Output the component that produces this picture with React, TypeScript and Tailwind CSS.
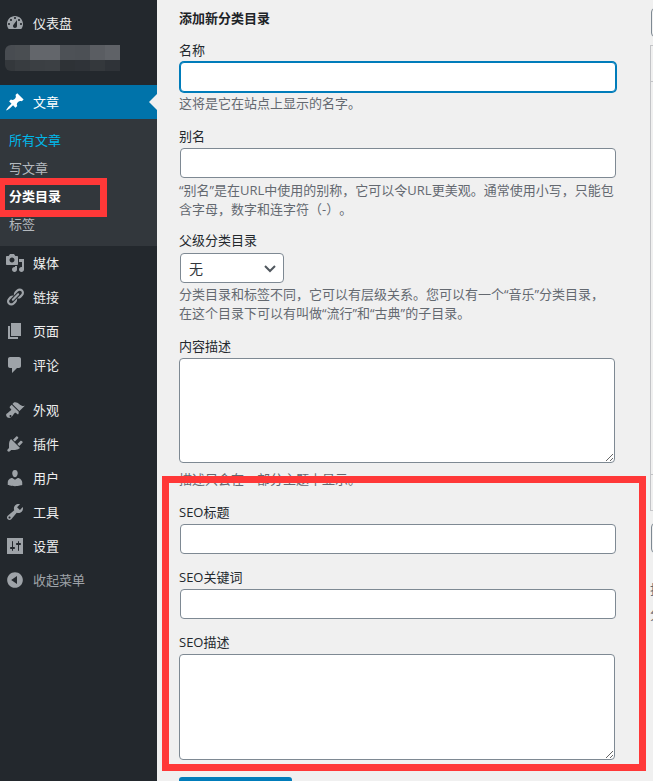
const font = { fontFamily: '"Open Sans", "Noto Sans CJK SC", sans-serif' };

const icons: Record<string, string> = {
  dashboard:
    "M3.76 16h12.48c1.1-1.37 1.76-3.11 1.76-5 0-4.42-3.58-8-8-8s-8 3.58-8 8c0 1.89.66 3.63 1.76 5zM10 4c.55 0 1 .45 1 1s-.45 1-1 1-1-.45-1-1 .45-1 1-1zM6 6c.55 0 1 .45 1 1s-.45 1-1 1-1-.45-1-1 .45-1 1-1zm8 0c.55 0 1 .45 1 1s-.45 1-1 1-1-.45-1-1 .45-1 1-1zm-5.37 5.55L12 7v6c0 1.1-.9 2-2 2s-2-.9-2-2c0-.57.24-1.08.63-1.45zM4 10c.55 0 1 .45 1 1s-.45 1-1 1-1-.45-1-1 .45-1 1-1zm12 0c.55 0 1 .45 1 1s-.45 1-1 1-1-.45-1-1 .45-1 1-1z",
  pin: "M10.44 3.02l1.82-1.82 6.36 6.35-1.83 1.82c-1.05-.68-2.48-.57-3.41.36l-.75.75c-.92.93-1.04 2.35-.35 3.41l-1.83 1.82-2.41-2.41-2.8 2.79c-.42.42-3.38 2.71-3.8 2.29s1.86-3.39 2.28-3.81l2.79-2.79L4.1 9.36l1.83-1.82c1.05.69 2.48.57 3.4-.36l.75-.75c.93-.92 1.05-2.35.36-3.41z",
  media:
    "M13 11V4c0-.55-.45-1-1-1h-1.67L9 1H5L3.67 3H2c-.55 0-1 .45-1 1v7c0 .55.45 1 1 1h10c.55 0 1-.45 1-1zM7 4.5c1.38 0 2.5 1.12 2.5 2.5S8.38 9.5 7 9.5 4.5 8.38 4.5 7 5.62 4.5 7 4.5zM14 6h5v10.5c0 1.38-1.12 2.5-2.5 2.5S14 17.88 14 16.5s1.12-2.5 2.5-2.5c.17 0 .34.02.5.05V9h-3V6zm-4 8.05V13h2v3.5c0 1.38-1.12 2.5-2.5 2.5S7 17.88 7 16.5 8.12 14 9.5 14c.17 0 .34.02.5.05z",
  links:
    "M17.74 2.76c1.68 1.69 1.68 4.41 0 6.1l-1.53 1.52c-1.12 1.12-2.7 1.47-4.14 1.09l2.62-2.61.76-.77.76-.76c.84-.84.84-2.2 0-3.04-.84-.85-2.2-.85-3.04 0l-.77.76-3.38 3.38c-.37-1.44-.02-3.02 1.1-4.14l1.52-1.53c1.69-1.68 4.42-1.68 6.1 0zM8.59 13.43l5.34-5.34c.42-.42.42-1.1 0-1.52-.44-.43-1.13-.39-1.53 0l-5.33 5.34c-.42.42-.42 1.1 0 1.52.44.43 1.13.39 1.52 0zm-.76 2.29l4.14-4.15c.38 1.44.03 3.02-1.09 4.14l-1.52 1.53c-1.69 1.68-4.41 1.68-6.1 0-1.68-1.68-1.68-4.42 0-6.1l1.53-1.52c1.12-1.12 2.7-1.47 4.14-1.1l-4.14 4.15c-.85.84-.85 2.2 0 3.05.84.84 2.2.84 3.04 0z",
  page: "M6 15V2h10v13H6zm-1 1h8v2H3V5h2v11z",
  comments:
    "M5 2h9c1.1 0 2 .9 2 2v7c0 1.1-.9 2-2 2h-2l-5 5v-5H5c-1.1 0-2-.9-2-2V4c0-1.1.9-2 2-2z",
  appearance:
    "M14.48 11.06L7.41 3.99l1.5-1.5c.5-.56 2.3-.47 3.51.32 1.21.8 1.43 1.28 2.91 2.1 1.18.64 2.45 1.26 4.45.85zm-.71.71L6.7 4.7 4.93 6.47c-.39.39-.39 1.02 0 1.41l1.06 1.06c.39.39.39 1.03 0 1.42-.6.6-1.43 1.11-2.21 1.69-.35.26-.7.53-1.01.84C1.43 13.23.91 14.45 1.2 15.6c.24 1.02 1.18 1.95 2.2 2.2 1.15.29 2.37-.23 3.72-1.58.31-.31.58-.66.84-1.01.58-.78 1.09-1.61 1.69-2.21.39-.39 1.03-.39 1.42 0l1.06 1.06c.39.39 1.02.39 1.41 0zM5.5 15c.55 0 1 .45 1 1s-.45 1-1 1-1-.45-1-1 .45-1 1-1z",
  plugins:
    "M13.11 4.36L9.87 7.6 8 5.73l3.24-3.24c.35-.34 1.05-.2 1.56.32.52.51.66 1.21.31 1.55zm-8 1.77l.91-1.12 9.01 9.01-1.19.84c-.71.71-2.63 1.16-3.82 1.16H6.14L4.9 17.26c-.59.59-1.54.59-2.12 0-.59-.58-.59-1.53 0-2.12l1.24-1.24v-3.88c0-1.13.4-3.19 1.09-3.89zm7.26 3.97l3.24-3.24c.34-.35 1.04-.21 1.55.31.52.51.66 1.21.31 1.55l-3.24 3.25z",
  users:
    "M10 9.25c-2.27 0-2.73-3.44-2.73-3.44C7 4.02 7.82 2 9.97 2c2.16 0 2.98 2.02 2.71 3.81 0 0-.41 3.44-2.68 3.44zm0 2.57L12.72 10c2.39 0 4.52 2.33 4.52 4.53v2.49s-3.65 1.13-7.24 1.13c-3.65 0-7.24-1.13-7.24-1.13v-2.49c0-2.25 1.94-4.48 4.47-4.48z",
  tools:
    "M16.68 9.77c-1.34 1.34-3.3 1.67-4.95.99l-5.41 6.52c-.99.99-2.59.99-3.58 0s-.99-2.59 0-3.57l6.52-5.42c-.68-1.65-.35-3.61.99-4.95 1.28-1.28 3.12-1.62 4.72-1.06l-2.89 2.89 2.82 2.82 2.86-2.87c.53 1.58.18 3.39-1.08 4.65zM3.81 16.21c.4.39 1.04.39 1.43 0 .4-.4.4-1.04 0-1.43-.39-.4-1.03-.4-1.43 0-.39.39-.39 1.03 0 1.43z",
  settings:
    "M18 18V2H2v16h16zM8 11h1c.55 0 1 .45 1 1s-.45 1-1 1H8v1.5c0 .28-.22.5-.5.5s-.5-.22-.5-.5V13H6c-.55 0-1-.45-1-1s.45-1 1-1h1V5.5c0-.28.22-.5.5-.5s.5.22.5.5V11zm5-2h-1c-.55 0-1-.45-1-1s.45-1 1-1h1V5.5c0-.28.22-.5.5-.5s.5.22.5.5V7h1c.55 0 1 .45 1 1s-.45 1-1 1h-1v5.5c0 .28-.22.5-.5.5s-.5-.22-.5-.5V9z",
  collapse:
    "M10 2.16c4.33 0 7.84 3.51 7.84 7.84s-3.51 7.84-7.84 7.84S2.16 14.33 2.16 10 5.71 2.16 10 2.16zm2 11.72V6.12L6.18 9.97z",
};

function Icon({ name, className }: { name: string; className: string }) {
  return (
    <svg viewBox="0 0 20 20" className={className} fill="currentColor" fillRule="evenodd">
      <path d={icons[name]} />
    </svg>
  );
}

function MenuRow({ icon, label }: { icon: string; label: string }) {
  return (
    <div className="flex h-[34px] items-center text-[13px] text-[#eeeeee]">
      <Icon name={icon} className="ml-[5px] h-5 w-5 text-[#9ea3a8]" />
      <span className="ml-[8px] pt-px">{label}</span>
    </div>
  );
}

const mosaicTop = ["#484c51", "#4a4e52", "#63666b", "#63666b", "#4d5156", "#4c5055", "#5a5d62", "#5f6267"];
const mosaicBottom = ["#34383c", "#383c40", "#3b3f43", "#3c4044", "#2e3236", "#2f3338", "#34383c", "#2f3338"];

function Sidebar() {
  return (
    <aside className="w-[157px] shrink-0 bg-[#23282d] pt-[6px]">
      <MenuRow icon="dashboard" label="仪表盘" />

      {/* blurred out site name */}
      <div className="mb-[14px] ml-[5px] mt-[5px]">
        <div className="flex h-[15px]">
          {mosaicTop.map((color, i) => (
            <div key={i} className={i === 0 ? "w-[10px] rounded-tl-[6px]" : "w-[15px]"} style={{ background: color }} />
          ))}
        </div>
        <div className="flex h-[11px]">
          {mosaicBottom.map((color, i) => (
            <div key={i} className={i === 0 ? "w-[10px] rounded-bl-[6px]" : "w-[15px]"} style={{ background: color }} />
          ))}
        </div>
      </div>

      <div className="relative flex h-[34px] items-center bg-[#0073aa] text-[13px] text-white">
        <Icon name="pin" className="ml-[5px] h-5 w-5 text-white" />
        <span className="ml-[8px] pt-px">文章</span>
        <div className="absolute right-0 top-[9px] h-0 w-0 border-y-[8px] border-r-[8px] border-y-transparent border-r-[#f0f0f0]" />
      </div>

      <div className="bg-[#32373c] pb-2 pt-[7px] text-[13px] leading-[28px] text-[#b4b9be]">
        <div className="pl-[9px] text-[#00b9eb]">所有文章</div>
        <div className="pl-[9px]">写文章</div>
        <div className="pl-[9px] font-bold text-white">分类目录</div>
        <div className="pl-[9px]">标签</div>
      </div>

      <MenuRow icon="media" label="媒体" />
      <MenuRow icon="links" label="链接" />
      <MenuRow icon="page" label="页面" />
      <MenuRow icon="comments" label="评论" />
      <div className="h-[11px]" />
      <MenuRow icon="appearance" label="外观" />
      <MenuRow icon="plugins" label="插件" />
      <MenuRow icon="users" label="用户" />
      <MenuRow icon="tools" label="工具" />
      <MenuRow icon="settings" label="设置" />
      <div className="flex h-[34px] items-center text-[13px] text-[#9ea3a8]">
        <Icon name="collapse" className="ml-[5px] h-5 w-5" />
        <span className="ml-[8px] pt-px">收起菜单</span>
      </div>
    </aside>
  );
}

function Label({ children, className = "" }: { children: React.ReactNode; className?: string }) {
  return <label className={`block h-5 text-[13px] leading-[19px] text-[#23282d] ${className}`}>{children}</label>;
}

function Help({ children }: { children: React.ReactNode }) {
  return <p className="text-[13px] leading-[19px] text-[#646970]">{children}</p>;
}

const inputClass = "ml-px block h-[30px] w-[436px] rounded-[4px] border border-[#7e8993] bg-white outline-none";
const textareaClass = "block w-[436px] rounded-[4px] border border-[#7e8993] bg-white outline-none";

function CategoryForm() {
  return (
    <form className="ml-[22px] w-[440px] shrink-0 pt-2">
      <h2 className="h-5 text-[13px] font-bold leading-5 text-[#1d2327]">添加新分类目录</h2>

      <Label className="mt-[13px]">名称</Label>
      <input className="ml-px mt-px block h-[30px] w-[436px] rounded-[4px] border border-[#007cba] bg-white shadow-[0_0_0_1px_#007cba] outline-none" />
      <div className="mt-[2px]">
        <Help>这将是它在站点上显示的名字。</Help>
      </div>

      <Label className="mt-[14px]">别名</Label>
      <input className={`${inputClass} mt-px`} />
      <div className="mt-[3px]">
        <Help>
          “别名”是在URL中使用的别称，它可以令URL更美观。通常使用小写，只能包含字母，数字和连字符（-）。
        </Help>
      </div>

      <Label className="mt-[12px]">父级分类目录</Label>
      <div className="relative ml-px mt-[2px] h-[30px] w-[104px]">
        <select className="h-full w-full appearance-none rounded-[4px] border border-[#7e8993] bg-white pl-2 text-[14px] text-[#32373c] outline-none">
          <option>无</option>
        </select>
        <svg viewBox="0 0 20 20" className="absolute right-[4px] top-[5px] h-5 w-5 text-[#50575e]" fill="none" stroke="currentColor" strokeWidth="2">
          <path d="M5 8l5 5 5-5" />
        </svg>
      </div>
      <div className="mt-[2px]">
        <Help>
          分类目录和标签不同，它可以有层级关系。您可以有一个“音乐”分类目录，
          <br />
          在这个目录下可以有叫做“流行”和“古典”的子目录。
        </Help>
      </div>

      <Label className="mt-[14px]">内容描述</Label>
      <textarea className={`${textareaClass} mt-px h-[105px]`} />
      <div className="mt-[7px]">
        <Help>描述只会在一部分主题中显示。</Help>
      </div>

      <Label className="mt-[14px]">SEO标题</Label>
      <input className={`${inputClass} mt-px`} />

      <Label className="mt-[14px]">SEO关键词</Label>
      <input className={`${inputClass} mt-px`} />

      <Label className="mt-[14px]">SEO描述</Label>
      <textarea className={`${textareaClass} mt-px h-[106px]`} />

      <button type="button" className="mt-[17px] h-8 w-[113px] rounded-[3px] bg-[#007cba] text-[13px] text-white">
        添加新分类目录
      </button>
    </form>
  );
}

// the neighbouring column, mostly cut off by the window edge
function RightColumn() {
  return (
    <div className="ml-[31px] w-[300px] shrink-0 pt-2">
      <div className="ml-px h-[29px] rounded-[4px] border border-[#7e8993]" />
      <div className="mt-2 h-[466px] border border-[#c3c4c7]">
        <div className="h-[36px] border-b border-[#c3c4c7]" />
        <div className="h-[393px] border-b border-[#c3c4c7]" />
      </div>
      <div className="ml-px mt-[12px] h-[30px] rounded-[4px] border border-[#7e8993]" />
      <p className="mt-[24px] text-[13px] leading-[25px] text-[#646970]">
        批量
        <br />
        分类
      </p>
    </div>
  );
}

export default function App() {
  return (
    <div className="relative flex h-[781px] w-[653px] overflow-hidden bg-[#f0f0f0] [text-spacing-trim:space-all]" style={font}>
      <Sidebar />
      <CategoryForm />
      <RightColumn />

      {/* red annotation frames drawn over the screenshot */}
      <div className="absolute left-0 top-[178px] h-[39px] w-[107px] border-y-[7px] border-l-[5px] border-r-[7px] border-[#ff3838]" />
      <div className="absolute left-[162px] top-[476px] h-[295px] w-[484px] border-[7px] border-[#ff3838]" />
    </div>
  );
}
